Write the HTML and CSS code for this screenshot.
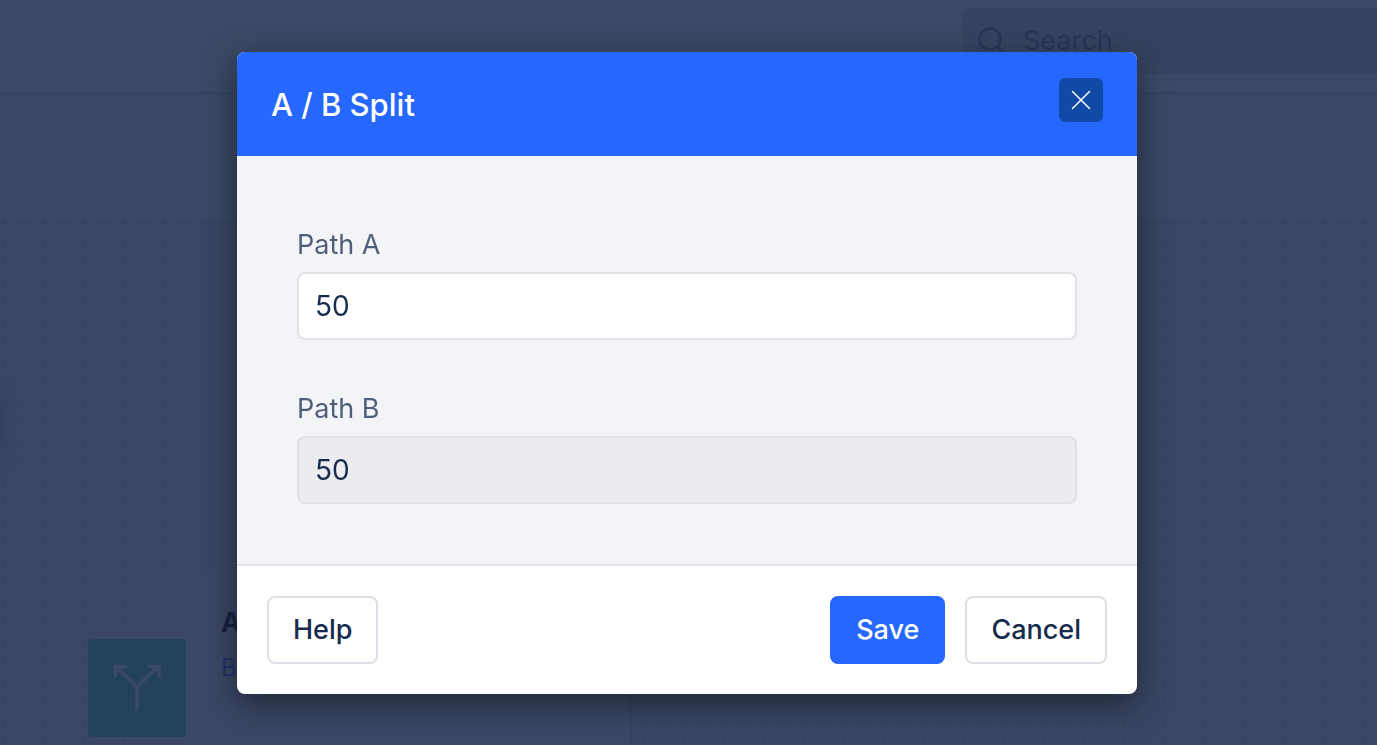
FILE: index.html
```
<!DOCTYPE html>
<html lang="en">
<head>
<meta charset="utf-8">
<title>A / B Split</title>
<link rel="stylesheet" href="styles.css">
</head>
<body>
<div class="app">
  <header class="topbar">
    <label class="search">
      <svg class="search-icon" viewBox="0 0 28 28" aria-hidden="true"><circle cx="12" cy="12" r="10.500"/><path d="M19.500 19.500l8 8"/></svg>
      <input class="search-input" type="search" placeholder="Search" aria-label="Search">
    </label>
  </header>
  <div class="subbar"></div>
  <main class="canvas">
    <div class="side-handle"></div>
    <article class="node">
      <div class="node-icon">
        <svg viewBox="0 0 48 48" aria-hidden="true"><path d="M24 45.500V29C24 23 21 20 16 15L3 3M24 29C24 23 27 20 32 15L45 3M2.500 12V2.500H13M35.500 2.500H46V12"/></svg>
      </div>
      <div class="node-text">
        <strong class="node-title">A</strong>
        <span class="node-sub">B</span>
      </div>
    </article>
  </main>
</div>
<div class="overlay">
  <section class="modal" role="dialog" aria-modal="true" aria-labelledby="modal-title">
    <header class="modal-head">
      <h1 class="modal-title" id="modal-title">A / B Split</h1>
      <button class="close" type="button" aria-label="Close">
        <svg viewBox="0 0 20 20" aria-hidden="true"><path d="M1.500 1.500l17 17M18.500 1.500l-17 17"/></svg>
      </button>
    </header>
    <div class="modal-body">
      <div class="field">
        <label class="label" for="path-a">Path A</label>
        <input class="input" id="path-a" type="text" value="50">
      </div>
      <div class="field">
        <label class="label" for="path-b">Path B</label>
        <input class="input input-readonly" id="path-b" type="text" value="50" readonly>
      </div>
    </div>
    <footer class="modal-foot">
      <button class="btn" type="button">Help</button>
      <div class="actions">
        <button class="btn btn-primary" type="button">Save</button>
        <button class="btn" type="button">Cancel</button>
      </div>
    </footer>
  </section>
</div>
</body>
</html>
```
FILE: styles.css
```
* { box-sizing: border-box; }
body {
  margin: 0;
  font-family: Inter, "Liberation Sans", sans-serif;
  font-size: 27px;
  line-height: 34px;
  color: #172b4d;
  background: #394664;
}
.app {
  display: flex;
  flex-direction: column;
  height: 100vh;
  overflow: hidden;
}
.topbar {
  display: flex;
  justify-content: flex-end;
  flex: none;
  padding: 8px 0 18px;
  background: #3b4966;
  border-bottom: 2px solid #364361;
}
.search {
  display: flex;
  align-items: center;
  gap: 17px;
  width: 415px;
  height: 66px;
  padding-left: 16px;
  background: #364462;
  border-radius: 8px 0 0 8px;
}
.search-icon {
  width: 28px;
  height: 28px;
  flex: none;
  fill: none;
  stroke: #263658;
  stroke-width: 2.5;
}
.search-input {
  min-width: 0;
  flex: 1;
  padding: 0;
  border: 0;
  background: none;
  font: inherit;
  outline: none;
}
.search-input::placeholder { color: #263658; opacity: 1; }
.subbar {
  flex: none;
  height: 128px;
  background: #3a4865;
  border-bottom: 2px solid #374462;
}
.canvas {
  position: relative;
  flex: 1;
  min-height: 0;
  background: conic-gradient(from 270deg at 2px 2px, #313f5d 90deg, transparent 0) 3px 0 / 20px 20px, #394664;
}
.side-handle {
  position: absolute;
  left: -20px;
  top: 168px;
  width: 20px;
  height: 70px;
  box-shadow: 0 0 16px #33415f;
}
.node {
  position: absolute;
  left: 129px;
  top: 347px;
  width: 501px;
  height: 236px;
  background: #3a4765;
  border-radius: 16px;
  box-shadow: 1px 2px 2px #344160;
}
.node-icon {
  position: absolute;
  left: -41px;
  top: 70px;
  display: grid;
  place-items: center;
  width: 98px;
  height: 98px;
  border-radius: 4px;
  background: #23425a;
}
.node-icon svg {
  width: 48px;
  height: 48px;
  fill: none;
  stroke: #3b4966;
  stroke-width: 3.5;
  stroke-linecap: round;
  stroke-linejoin: round;
}
.node-text {
  display: flex;
  flex-direction: column;
  gap: 12px;
  padding: 37px 0 0 92px;
}
.node-title { font-weight: 700; color: #121e3e; }
.node-sub { font-size: 24px; line-height: 32px; color: #1e3069; }
.overlay {
  position: fixed;
  inset: 0;
  display: flex;
  justify-content: center;
  align-items: flex-start;
  padding: 52px 3px 0 0;
}
.modal {
  width: 900px;
  max-width: 100%;
  overflow: hidden;
  border-radius: 8px;
  background: #fff;
  box-shadow: 0 10px 32px rgba(24, 28, 38, 0.75);
}
.modal-head {
  display: flex;
  justify-content: space-between;
  align-items: flex-start;
  padding: 26px 34px 33px;
  background: #2668ff;
}
.modal-title {
  margin: 9px 0 0;
  font-size: 31px;
  line-height: 36px;
  font-weight: 500;
  color: #fff;
}
.close {
  display: grid;
  place-items: center;
  width: 44px;
  height: 44px;
  padding: 0;
  border: 0;
  border-radius: 6px;
  background: #0f4aa6;
}
.close svg {
  width: 20px;
  height: 20px;
  fill: none;
  stroke: #fff;
  stroke-width: 1.5;
  stroke-linecap: round;
}
.modal-body {
  display: flex;
  flex-direction: column;
  gap: 52px;
  padding: 72px 60px 60px;
  background: #f3f4f7;
  border-bottom: 2px solid #dfe1e6;
}
.field { display: flex; flex-direction: column; gap: 10px; }
.label { color: #505f79; }
.input {
  width: 100%;
  height: 68px;
  padding: 0 16px;
  border: 2px solid #dfe1e6;
  border-radius: 8px;
  background: #fff;
  color: #172b4d;
  font: inherit;
  font-size: 28px;
}
.input-readonly { background: #ebecf0; }
.modal-foot {
  display: flex;
  justify-content: space-between;
  padding: 30px;
}
.actions { display: flex; gap: 20px; }
.btn {
  height: 68px;
  padding: 0 24px;
  border: 2px solid #dfe0e7;
  border-radius: 8px;
  background: #fff;
  color: #172b4d;
  font: inherit;
  font-weight: 500;
}
.btn-primary { border-color: #2668ff; background: #2668ff; color: #fff; }
```
